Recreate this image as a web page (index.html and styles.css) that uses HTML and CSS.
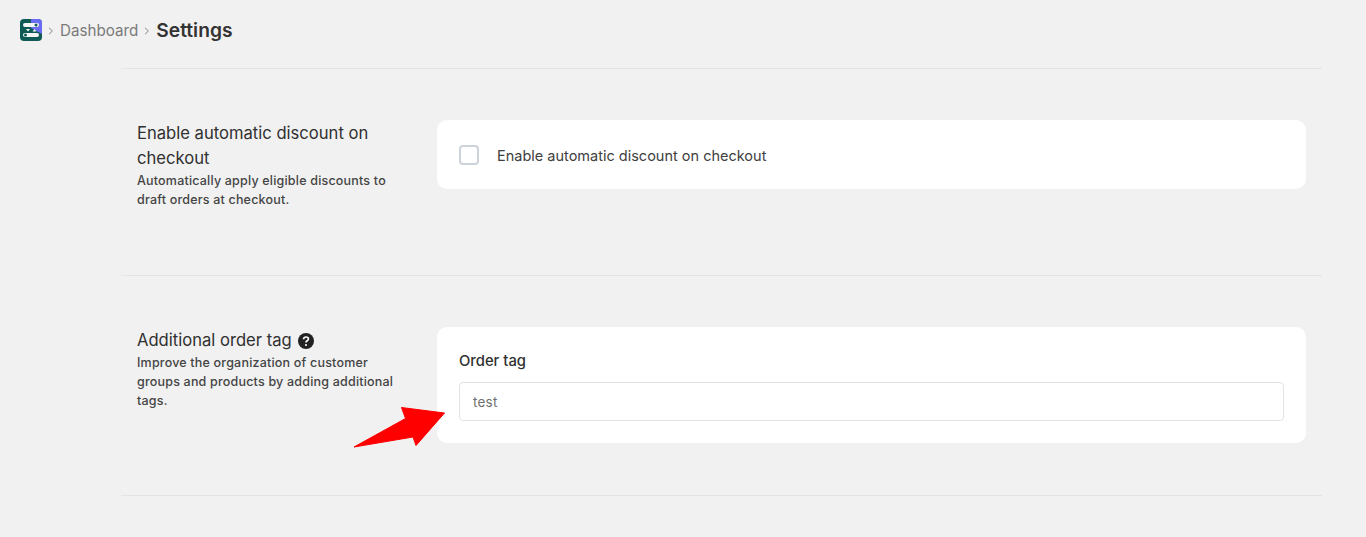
FILE: index.html
```html
<!DOCTYPE html>
<html lang="en">

<head>
    <meta charset="UTF-8">
    <meta name="viewport" content="width=device-width, initial-scale=1.0">
    <title>Settings</title>
    <link rel="stylesheet" href="styles.css">
</head>

<body>
    <header class="topbar">
        <svg class="logo" width="22" height="22" viewBox="0 0 22 22">
            <rect width="22" height="22" rx="4" fill="#0f5a55"/>
            <path d="M11 0h7a4 4 0 0 1 4 4v11L11 9z" fill="#6a6cf6"/>
            <rect x="3" y="4" width="16" height="4" rx="2" fill="#f4f6f6"/>
            <circle cx="16" cy="6" r="1.500" fill="#0f5a55"/>
            <path d="M6 10h4l-2 2.600zM12.500 12.600l2-2.600 2 2.600z" fill="#f4f6f6"/>
            <rect x="3" y="14" width="16" height="4" rx="2" fill="#f4f6f6"/>
            <circle cx="5.500" cy="16" r="1.500" fill="#0f5a55"/>
        </svg>
        <svg class="chevron" width="6" height="8" viewBox="0 0 6 8"><path d="M1 .8 4.400 4 1 7.200" fill="none" stroke="#8a8a8a" stroke-width="1"/></svg>
        <span class="crumb">Dashboard</span>
        <svg class="chevron" width="6" height="8" viewBox="0 0 6 8"><path d="M1 .8 4.400 4 1 7.200" fill="none" stroke="#8a8a8a" stroke-width="1"/></svg>
        <span class="crumb-current">Settings</span>
    </header>

    <main class="content">
        <section class="row row-first">
            <div class="info">
                <h2>Enable automatic discount on checkout</h2>
                <p>Automatically apply eligible discounts to draft orders at checkout.</p>
            </div>
            <div class="card card-check">
                <span class="checkbox"></span>
                <span class="check-label">Enable automatic discount on checkout</span>
            </div>
        </section>

        <section class="row row-second">
            <div class="info">
                <h2>Additional order tag
                    <svg class="help" width="16" height="16" viewBox="0 0 16 16">
                        <circle cx="8" cy="8" r="8" fill="#222"/>
                        <path d="M5.600 6.200c0-1.400 1-2.200 2.400-2.200s2.400.8 2.400 2c0 1.800-2.400 1.700-2.400 3.400" fill="none" stroke="#fff" stroke-width="1.700"/>
                        <circle cx="8" cy="12" r="1.100" fill="#fff"/>
                    </svg>
                </h2>
                <p>Improve the organization of customer groups and products by adding additional tags.</p>
            </div>
            <div class="card card-field">
                <label for="tag">Order tag</label>
                <input type="text" id="tag" value="test">
            </div>
        </section>
    </main>

    <svg class="arrow" width="100" height="50" viewBox="0 0 100 50">
        <path d="M49.500 5.500 92.500 11 64 43.500 61 35 2 45 53.500 16.500z" fill="#fe0000" stroke="#fe0000" stroke-width="1" stroke-linejoin="round"/>
    </svg>
</body>

</html>
```

FILE: styles.css
```css
* {
    box-sizing: border-box;
}

body {
    font-family: Inter, "Liberation Sans", sans-serif;
    margin: 0;
    background-color: #f1f1f1;
    color: #303030;
    min-height: 537px;
    overflow: hidden;
    position: relative;
}

.topbar {
    display: flex;
    align-items: center;
    height: 60px;
    padding-left: 20px;
}

.logo {
    margin-right: 6px;
}

.chevron {
    margin: 2px 6px 0 0;
}

.crumb {
    font-size: 15.2px;
    color: #7a7a7a;
    margin-right: 6px;
}

.crumb-current {
    font-size: 19.2px;
    font-weight: 600;
    color: #333;
}

.content {
    margin-left: 121px;
    width: 1201px;
    padding-top: 8px;
}

.row {
    display: grid;
    grid-template-columns: 265px 869px;
    column-gap: 35px;
    padding: 51px 16px 0;
    border-top: 1px solid #e4e4e4;
}

.row-first {
    height: 207px;
}

.row-second {
    height: 221px;
    border-bottom: 1px solid #e4e4e4;
}

.info {
    padding-top: 1px;
}

.info h2 {
    font-size: 16.600px;
    font-weight: 430;
    line-height: 25px;
    margin: 0;
}

.info p {
    font-size: 12.500px;
    font-weight: 450;
    letter-spacing: 0.2px;
    line-height: 19px;
    margin: 0;
    color: #444;
}

.help {
    vertical-align: -3px;
    margin-left: 2px;
}

.card {
    background: #fff;
    border-radius: 10px;
}

.card-check {
    display: flex;
    align-items: center;
    height: 69px;
    padding: 0 22px;
}

.checkbox {
    width: 20px;
    height: 20px;
    border: 2px solid #cdd3da;
    border-radius: 4px;
    margin-right: 18px;
}

.check-label {
    font-size: 14.500px;
    color: #404040;
    padding-top: 2px;
}

.card-field {
    height: 116px;
    padding: 24px 22px 0;
}

.card-field label {
    display: block;
    font-size: 14.800px;
    font-weight: 450;
    line-height: 20px;
    margin-bottom: 11px;
}

.card-field input {
    display: block;
    width: 100%;
    height: 39px;
    padding: 0 13px;
    border: 1px solid #e3e3e3;
    border-radius: 4px;
    background: #fff;
    font-family: inherit;
    font-size: 13.500px;
    letter-spacing: 0.2px;
    color: #707070;
}

/* annotation over the screenshot */
.arrow {
    position: absolute;
    left: 352px;
    top: 402px;
}
```
